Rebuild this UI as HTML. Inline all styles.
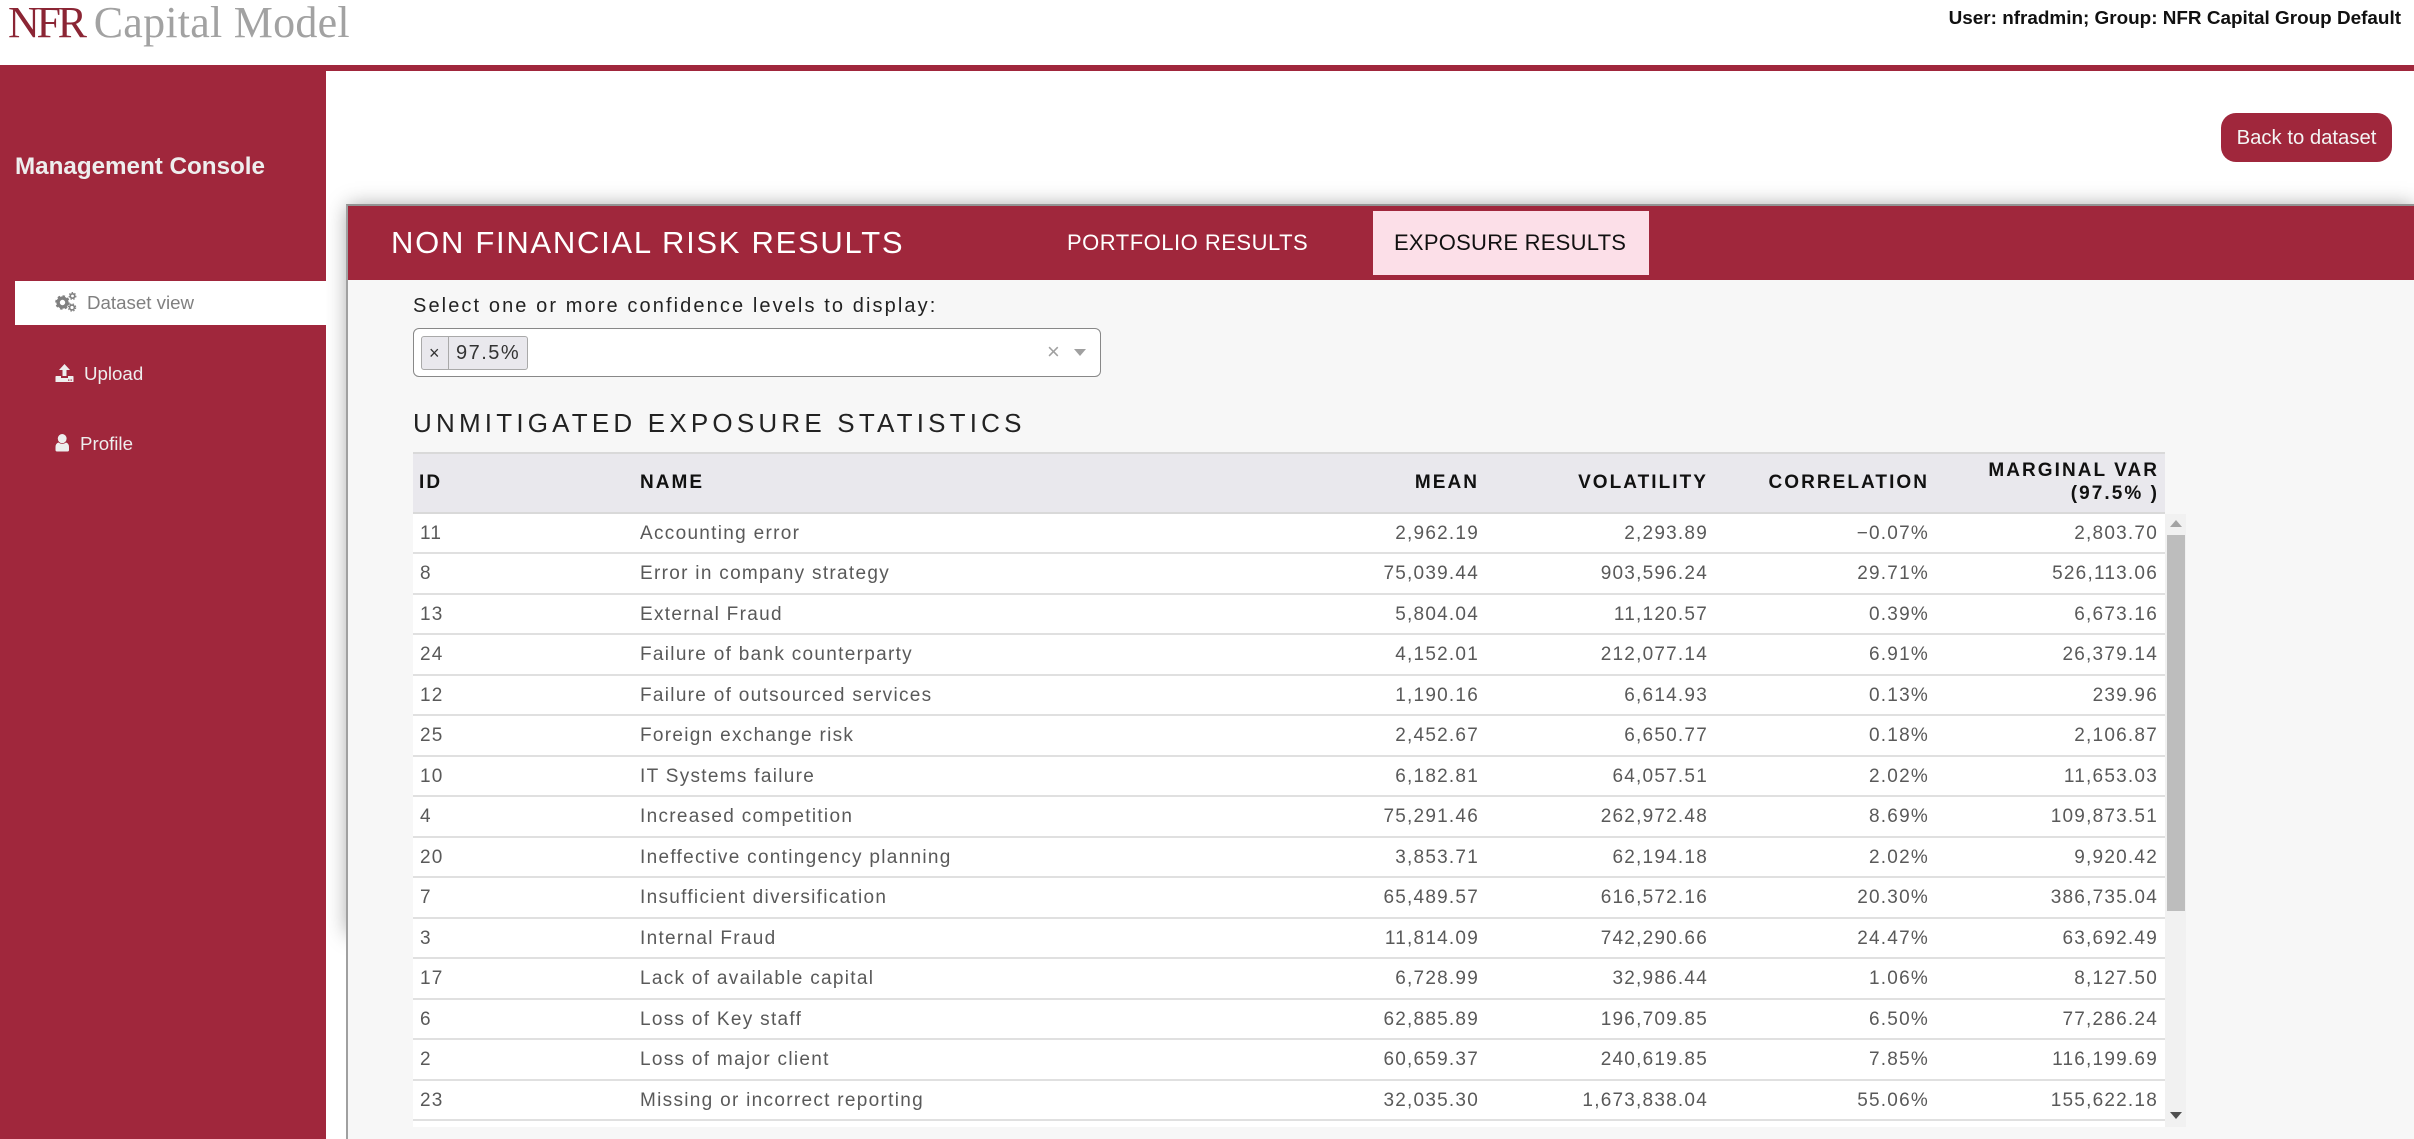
<!DOCTYPE html>
<html lang="en">
<head>
<meta charset="utf-8">
<title>NFR Capital Model</title>
<style>
*{box-sizing:border-box;margin:0;padding:0}
html,body{width:2414px;height:1139px;overflow:hidden;background:#fff;font-family:"Liberation Sans",Arial,sans-serif}
.a{position:absolute;white-space:nowrap}
#logo{left:8px;top:-3px;height:52px;line-height:52px;font-family:"Liberation Serif",serif;font-size:44px;filter:blur(.35px)}
#logo b{font-weight:normal;color:#8b2534;letter-spacing:-3.3px;margin-right:10px}
#logo span{color:#a2a2a2;letter-spacing:.25px}
#user{right:13px;top:7px;line-height:24px;font-size:18.9px;font-weight:bold;color:#111}
#bar{left:0;top:65px;width:2414px;height:6px;background:#a0273c}
#side{left:0;top:65px;width:326px;height:1074px;background:#a0273c}
#mc{left:15px;top:153px;line-height:28px;font-size:24.2px;font-weight:bold;color:#eee}
#act{left:15px;top:281px;width:311px;height:44px;background:#fff}
.nav{font-size:18.7px;line-height:24px;color:#eee}
#back{left:2221px;top:113px;width:171px;height:49px;border-radius:15px;background:#a0273c;color:#f4f4f4;font-size:20.3px;line-height:50px;text-align:center}
#shad{left:348px;top:206px;width:2066px;height:728px;box-shadow:0 0 20px rgba(0,0,0,.38)}
#panel{left:346px;top:204px;width:2068px;height:935px;background:#f7f7f7;border-left:2px solid #a0a0a0;border-top:2px solid #939393}
#phead{left:348px;top:206px;width:2066px;height:74px;background:#a0273c}
#title{left:391px;top:224px;line-height:38px;font-size:31px;letter-spacing:1.72px;color:#fff}
.tab{top:229px;line-height:28px;font-size:22px}
#tabbg{left:1373px;top:211px;width:276px;height:64px;background:#fcdfe8}
#lab{left:413px;top:294px;line-height:24px;font-size:20px;letter-spacing:2.1px;color:#222}
#sel{left:413px;top:328px;width:688px;height:49px;background:#fff;border:1.5px solid #888;border-radius:6px}
#tag{left:421px;top:336px;width:107px;height:34px;background:#e9e8ed;border:1.5px solid #a9a9a9;border-radius:3px}
#tagsep{left:448px;top:337px;width:1px;height:32px;background:#a9a9a9}
#tagx{left:429px;top:339px;line-height:28px;font-size:18px;color:#333}
#tagt{left:456px;top:339px;line-height:28px;font-size:20px;letter-spacing:1.5px;color:#333}
#clr{left:1047px;top:338px;line-height:28px;font-size:22px;color:#a0a0a0}
#arr{left:1074px;top:349px;width:0;height:0;border-left:6px solid transparent;border-right:6px solid transparent;border-top:7px solid #a0a0a0}
#h2{left:413px;top:406px;line-height:34px;font-size:26px;letter-spacing:4.2px;color:#222}
#thead{left:413px;top:452px;width:1752px;height:62px;background:#e9e8ed;border-top:2px solid #d9d9d9;border-bottom:2px solid #d9d9d9;font-weight:bold;font-size:19px;letter-spacing:2.05px;color:#111}
#thead span{position:absolute;white-space:nowrap;line-height:23px;top:17px}
#thead .l2{top:5px;text-align:right}
#body{left:413px;top:513.5px;width:1752px;height:613.5px;background:#fff;overflow:hidden;font-size:19px;letter-spacing:1.22px;color:#595959}
.r{position:relative;height:40.5px;border-bottom:2px solid #e0e0e0}
.r span{position:absolute;white-space:nowrap;top:9px;line-height:22px}
.r .n{letter-spacing:1.3px}
.i{left:7px}.n{left:227px}.m{right:686px}.v{right:457px}.c{right:236px}.g{right:7px}
#thead .i{left:6px}#thead .n{left:227px}#thead .m{right:686px}#thead .v{right:457px}#thead .c{right:236px}#thead .g{right:6px}
#track{left:2165px;top:513.5px;width:21px;height:613.5px;background:#f1f1f1}
#thumb{left:2167px;top:535px;width:18px;height:376px;background:#bdbdbd}
#up{left:2170px;top:520px;width:0;height:0;border-left:6px solid transparent;border-right:6px solid transparent;border-bottom:7px solid #a3a3a3}
#dn{left:2170px;top:1112px;width:0;height:0;border-left:6px solid transparent;border-right:6px solid transparent;border-top:7px solid #505050}
</style>
</head>
<body>
<div class="a" id="logo"><b>NFR</b><span>Capital Model</span></div>
<div class="a" id="user">User: nfradmin; Group: NFR Capital Group Default</div>
<div class="a" id="shad"></div>
<div class="a" id="bar"></div>
<div class="a" id="side"></div>
<div class="a" id="mc">Management Console</div>
<div class="a" id="act"></div>

<svg class="a" style="left:54px;top:291px" width="24" height="22" viewBox="0 0 24 22">
  <circle cx="8.5" cy="11.5" r="4.4" fill="none" stroke="#808080" stroke-width="3.4"/>
  <circle cx="8.5" cy="11.5" r="6.4" fill="none" stroke="#808080" stroke-width="1.8" stroke-dasharray="2.5 2.5"/>
  <circle cx="18.5" cy="5" r="2.2" fill="none" stroke="#808080" stroke-width="1.6"/>
  <circle cx="18.5" cy="5" r="3.4" fill="none" stroke="#808080" stroke-width="1.1" stroke-dasharray="1.5 1.5"/>
  <circle cx="18" cy="16.5" r="2.4" fill="none" stroke="#808080" stroke-width="1.6"/>
  <circle cx="18" cy="16.5" r="3.7" fill="none" stroke="#808080" stroke-width="1.1" stroke-dasharray="1.5 1.5"/>
</svg>
<div class="a nav" style="left:87px;top:291px;color:#808080">Dataset view</div>

<svg class="a" style="left:55px;top:363px" width="19" height="20" viewBox="0 0 19 20">
  <path d="M9.5 1L15 7H11.5V13H7.5V7H4Z" fill="#eee"/>
  <path d="M1 13H6V15H13V13H18Q18.5 13 18.5 14V19H.5V14Q.5 13 1 13Z" fill="#eee"/>
  <rect x="13" y="16.5" width="1.4" height="1.2" fill="#a0273c"/><rect x="15.5" y="16.5" width="1.4" height="1.2" fill="#a0273c"/>
</svg>
<div class="a nav" style="left:84px;top:362px">Upload</div>

<svg class="a" style="left:55px;top:434px" width="15" height="18" viewBox="0 0 15 18">
  <ellipse cx="7.2" cy="4.6" rx="4.4" ry="4.6" fill="#eee"/>
  <path d="M3.5 8.5Q7.2 11.5 11 8.5Q14 9.5 14 13V16Q14 17.5 12.5 17.5H2Q.5 17.5 .5 16V13Q.5 9.5 3.5 8.5Z" fill="#eee"/>
</svg>
<div class="a nav" style="left:80px;top:432px">Profile</div>

<div class="a" id="back">Back to dataset</div>

<div class="a" id="panel"></div>
<div class="a" id="phead"></div>
<div class="a" id="title">NON FINANCIAL RISK RESULTS</div>
<div class="a tab" style="left:1067px;color:#fff;letter-spacing:.5px">PORTFOLIO RESULTS</div>
<div class="a" id="tabbg"></div>
<div class="a tab" style="left:1394px;color:#111;letter-spacing:.25px">EXPOSURE RESULTS</div>

<div class="a" id="lab">Select one or more confidence levels to display:</div>
<div class="a" id="sel"></div>
<div class="a" id="tag"></div>
<div class="a" id="tagsep"></div>
<div class="a" id="tagx">×</div>
<div class="a" id="tagt">97.5%</div>
<div class="a" id="clr">×</div>
<div class="a" id="arr"></div>

<div class="a" id="h2">UNMITIGATED EXPOSURE STATISTICS</div>

<div class="a" id="thead">
  <span class="i">ID</span><span class="n">NAME</span><span class="m">MEAN</span><span class="v">VOLATILITY</span><span class="c">CORRELATION</span><span class="g l2">MARGINAL VAR<br>(97.5% )</span>
</div>

<div class="a" id="body">
<div class="r"><span class="i">11</span><span class="n">Accounting error</span><span class="m">2,962.19</span><span class="v">2,293.89</span><span class="c">−0.07%</span><span class="g">2,803.70</span></div>
<div class="r"><span class="i">8</span><span class="n">Error in company strategy</span><span class="m">75,039.44</span><span class="v">903,596.24</span><span class="c">29.71%</span><span class="g">526,113.06</span></div>
<div class="r"><span class="i">13</span><span class="n">External Fraud</span><span class="m">5,804.04</span><span class="v">11,120.57</span><span class="c">0.39%</span><span class="g">6,673.16</span></div>
<div class="r"><span class="i">24</span><span class="n">Failure of bank counterparty</span><span class="m">4,152.01</span><span class="v">212,077.14</span><span class="c">6.91%</span><span class="g">26,379.14</span></div>
<div class="r"><span class="i">12</span><span class="n">Failure of outsourced services</span><span class="m">1,190.16</span><span class="v">6,614.93</span><span class="c">0.13%</span><span class="g">239.96</span></div>
<div class="r"><span class="i">25</span><span class="n">Foreign exchange risk</span><span class="m">2,452.67</span><span class="v">6,650.77</span><span class="c">0.18%</span><span class="g">2,106.87</span></div>
<div class="r"><span class="i">10</span><span class="n">IT Systems failure</span><span class="m">6,182.81</span><span class="v">64,057.51</span><span class="c">2.02%</span><span class="g">11,653.03</span></div>
<div class="r"><span class="i">4</span><span class="n">Increased competition</span><span class="m">75,291.46</span><span class="v">262,972.48</span><span class="c">8.69%</span><span class="g">109,873.51</span></div>
<div class="r"><span class="i">20</span><span class="n">Ineffective contingency planning</span><span class="m">3,853.71</span><span class="v">62,194.18</span><span class="c">2.02%</span><span class="g">9,920.42</span></div>
<div class="r"><span class="i">7</span><span class="n">Insufficient diversification</span><span class="m">65,489.57</span><span class="v">616,572.16</span><span class="c">20.30%</span><span class="g">386,735.04</span></div>
<div class="r"><span class="i">3</span><span class="n">Internal Fraud</span><span class="m">11,814.09</span><span class="v">742,290.66</span><span class="c">24.47%</span><span class="g">63,692.49</span></div>
<div class="r"><span class="i">17</span><span class="n">Lack of available capital</span><span class="m">6,728.99</span><span class="v">32,986.44</span><span class="c">1.06%</span><span class="g">8,127.50</span></div>
<div class="r"><span class="i">6</span><span class="n">Loss of Key staff</span><span class="m">62,885.89</span><span class="v">196,709.85</span><span class="c">6.50%</span><span class="g">77,286.24</span></div>
<div class="r"><span class="i">2</span><span class="n">Loss of major client</span><span class="m">60,659.37</span><span class="v">240,619.85</span><span class="c">7.85%</span><span class="g">116,199.69</span></div>
<div class="r"><span class="i">23</span><span class="n">Missing or incorrect reporting</span><span class="m">32,035.30</span><span class="v">1,673,838.04</span><span class="c">55.06%</span><span class="g">155,622.18</span></div>
</div>

<div class="a" id="track"></div>
<div class="a" id="thumb"></div>
<div class="a" id="up"></div>
<div class="a" id="dn"></div>
</body>
</html>
